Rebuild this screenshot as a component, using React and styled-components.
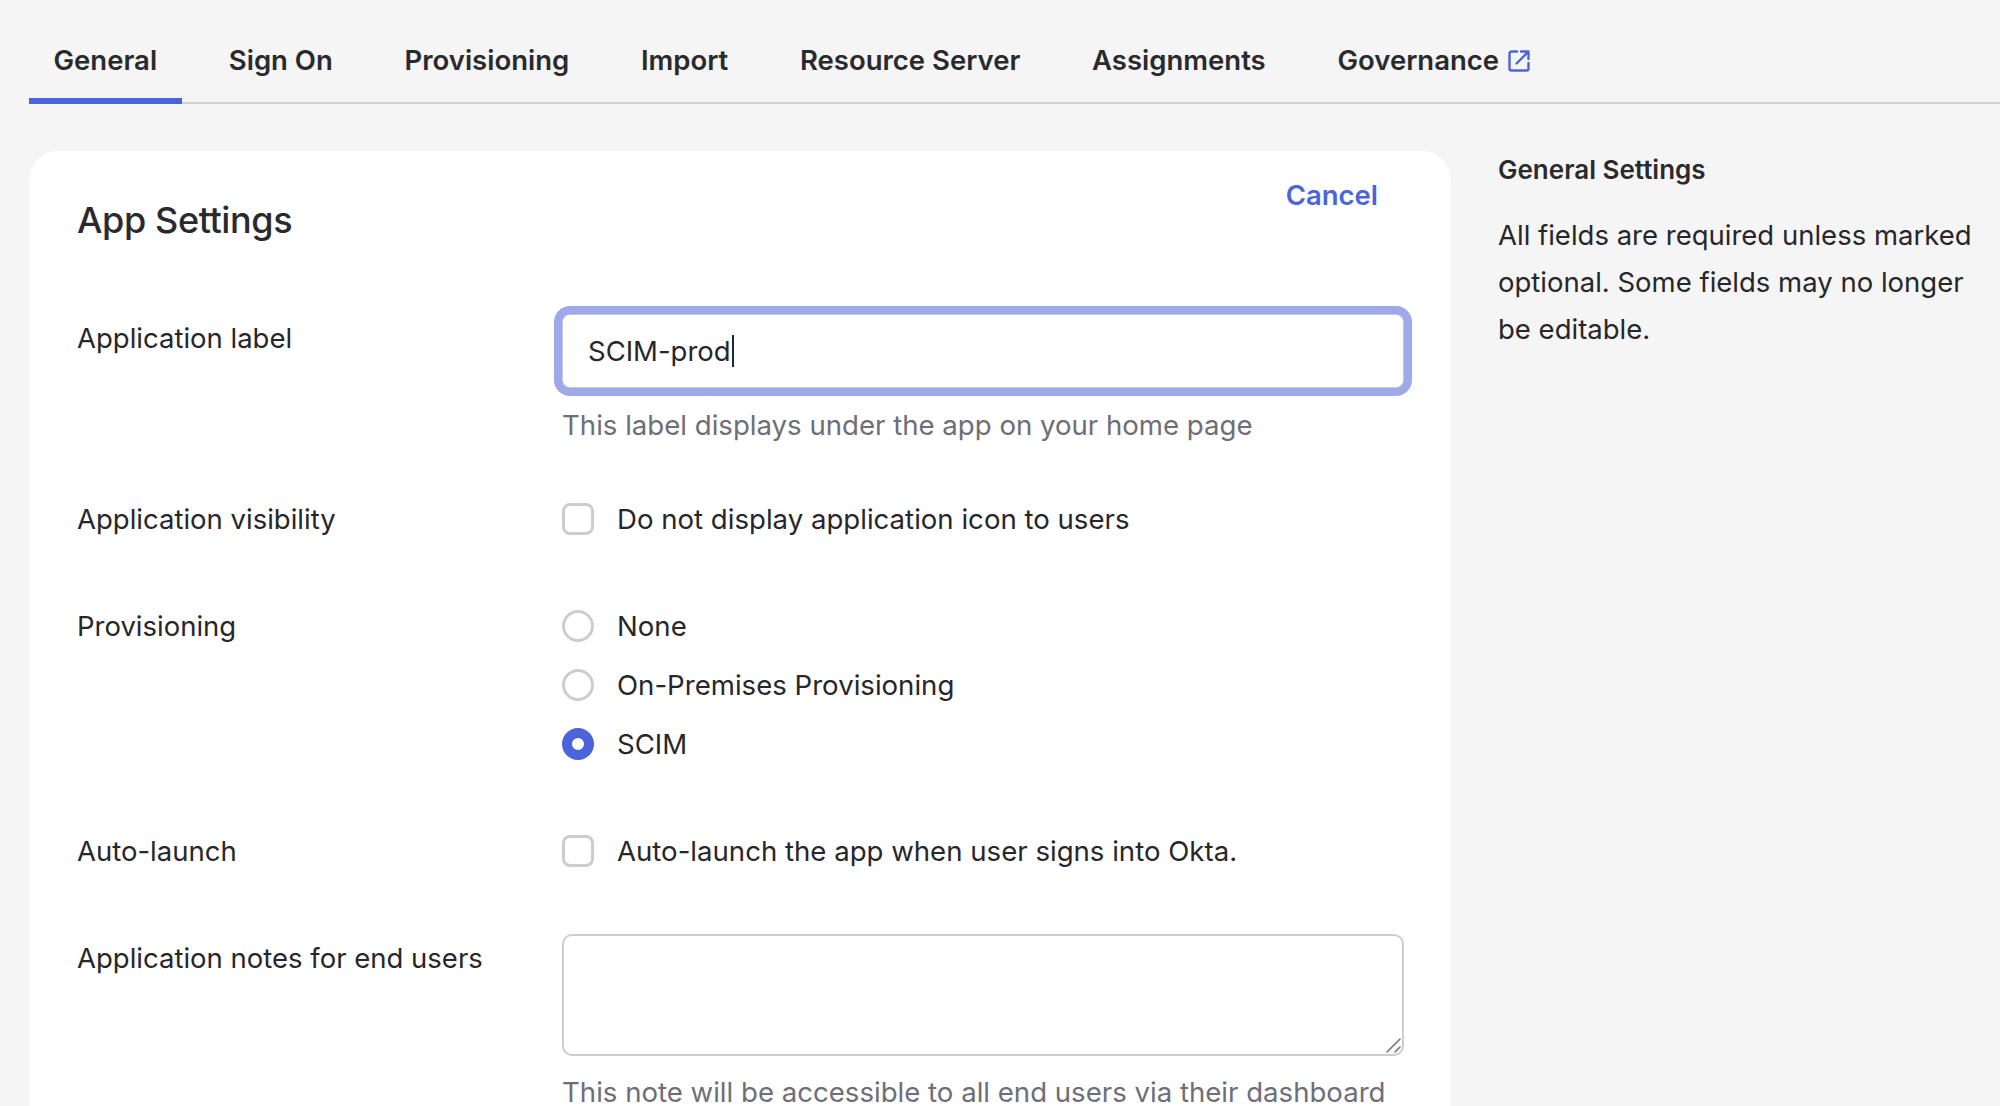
import React from "react";
import styled, { createGlobalStyle } from "styled-components";

const GlobalStyle = createGlobalStyle`
  html, body {
    margin: 0;
    height: 100%;
    overflow: hidden;
    background: #f5f5f5;
  }
  * { box-sizing: border-box; }
  body {
    font-family: Inter, "Liberation Sans", sans-serif;
    color: #27272b;
    -webkit-font-smoothing: antialiased;
  }
`;

const Page = styled.div`
  height: 1106px;
  overflow: hidden;
  padding: 0 0 0 29px;
`;

const TabBar = styled.nav`
  display: flex;
  gap: 22.7px;
  height: 104px;
  border-bottom: 2.5px solid #cfcfd0;
`;

const Tab = styled.a`
  display: flex;
  align-items: center;
  gap: 8px;
  height: 104px;
  padding: 21px 24.5px 0;
  font-size: 27.5px;
  font-weight: 600;
  color: #2a2a2e;
  border-bottom: 6.5px solid ${(p) => (p.$active ? "#4c64d9" : "transparent")};
  svg {
    margin-top: 2px;
  }
`;

const Content = styled.div`
  display: flex;
  gap: 47px;
  margin-top: 47px;
`;

const Card = styled.section`
  flex: none;
  width: 1422px;
  height: 1000px;
  padding: 24px 48px 0;
  background: #fff;
  border-radius: 30px;
`;

const CardHead = styled.header`
  display: flex;
  justify-content: space-between;
  align-items: flex-start;
  height: 139px;
  padding-right: 25px;
`;

const Title = styled.h2`
  margin: 22px 0 0;
  font-size: 36px;
  line-height: 46px;
  font-weight: 500;
  letter-spacing: -0.4px;
  color: #2a2a2e;
`;

const CancelLink = styled.a`
  margin-top: 2px;
  font-size: 27.5px;
  line-height: 36px;
  font-weight: 600;
  color: #4c64d9;
`;

const Row = styled.div`
  display: grid;
  grid-template-columns: 485px 842px;
  margin-bottom: ${(p) => p.$gap || 0}px;
`;

const Label = styled.label`
  font-size: 27.5px;
  line-height: 36px;
  padding-top: ${(p) => p.$top || 0}px;
`;

const FocusedInput = styled.div`
  display: flex;
  align-items: center;
  height: 74px;
  padding: 0 25px;
  font-size: 27.5px;
  border: 1px solid #c8c8cc;
  border-radius: 8px;
  background: #fff;
  box-shadow: 0 0 0 8px #9fa8e8;
`;

const Caret = styled.span`
  width: 2px;
  height: 32px;
  margin-left: 1px;
  background: #27272b;
`;

const Hint = styled.p`
  margin: ${(p) => p.$top || 0}px 0 0;
  font-size: 27.6px;
  line-height: ${(p) => p.$line || 36}px;
  color: #6e6e78;
`;

const Option = styled.label`
  display: flex;
  align-items: center;
  gap: 23px;
  height: 36px;
  margin-bottom: ${(p) => p.$gap || 0}px;
  font-size: 27.6px;
`;

const Box = styled.input`
  appearance: none;
  flex: none;
  width: 32px;
  height: 32px;
  margin: 0;
  border: 3.5px solid #cdcdcf;
  border-radius: ${(p) => (p.type === "radio" ? "50%" : "8px")};
  background: #fff;
  &:checked {
    border: 10px solid #4c64d9;
  }
`;

const NotesWrap = styled.div`
  position: relative;
  height: 122px;
`;

const Notes = styled.textarea`
  display: block;
  width: 100%;
  height: 100%;
  border: 2px solid #cdcdcf;
  border-radius: 10px;
  background: #fff;
  resize: none;
`;

const ResizeGrip = styled.svg`
  position: absolute;
  right: 3px;
  bottom: 3px;
`;

const Aside = styled.aside`
  width: 480px;
`;

const AsideTitle = styled.h3`
  margin: 3px 0 0;
  font-size: 26px;
  line-height: 32px;
  font-weight: 600;
  color: #2a2a2e;
`;

const AsideText = styled.p`
  margin: 26px 0 0;
  font-size: 27.5px;
  line-height: 47px;
`;

const ExternalIcon = () => (
  <svg width="24" height="24" viewBox="0 0 24 24" fill="none" stroke="#4c64d9" strokeWidth="2.4" strokeLinecap="round" strokeLinejoin="round">
    <path d="M10 2.5H4.5a2 2 0 0 0-2 2v15a2 2 0 0 0 2 2h15a2 2 0 0 0 2-2V14" />
    <path d="M9.5 14.5 21 3M14 2.5h7.5V10" />
  </svg>
);

const tabs = ["General", "Sign On", "Provisioning", "Import", "Resource Server", "Assignments"];

export default function App() {
  return (
    <Page>
      <GlobalStyle />
      <TabBar>
        {tabs.map((t, i) => (
          <Tab key={t} $active={i === 0}>{t}</Tab>
        ))}
        <Tab>Governance <ExternalIcon /></Tab>
      </TabBar>
      <Content>
        <Card>
          <CardHead>
            <Title>App Settings</Title>
            <CancelLink>Cancel</CancelLink>
          </CardHead>
          <Row $gap={58}>
            <Label $top={6}>Application label</Label>
            <div>
              <FocusedInput>SCIM-prod<Caret /></FocusedInput>
              <Hint $top={19}>This label displays under the app on your home page</Hint>
            </div>
          </Row>
          <Row $gap={71}>
            <Label>Application visibility</Label>
            <Option><Box type="checkbox" />Do not display application icon to users</Option>
          </Row>
          <Row $gap={71}>
            <Label>Provisioning</Label>
            <div>
              <Option $gap={23}><Box type="radio" name="prov" />None</Option>
              <Option $gap={23}><Box type="radio" name="prov" />On-Premises Provisioning</Option>
              <Option><Box type="radio" name="prov" defaultChecked />SCIM</Option>
            </div>
          </Row>
          <Row $gap={65}>
            <Label>Auto-launch</Label>
            <Option><Box type="checkbox" />Auto-launch the app when user signs into Okta.</Option>
          </Row>
          <Row>
            <Label $top={6}>Application notes for end users</Label>
            <div>
              <NotesWrap>
                <Notes />
                <ResizeGrip width="15" height="15" viewBox="0 0 15 15" fill="none" stroke="#77777d" strokeWidth="1.6" strokeLinecap="round">
                  <path d="M1 14 14 1M9 14l5-5" />
                </ResizeGrip>
              </NotesWrap>
              <Hint $top={22} $line={28}>This note will be accessible to all end users via their dashboard</Hint>
            </div>
          </Row>
        </Card>
        <Aside>
          <AsideTitle>General Settings</AsideTitle>
          <AsideText>All fields are required unless marked optional. Some fields may no longer be editable.</AsideText>
        </Aside>
      </Content>
    </Page>
  );
}
